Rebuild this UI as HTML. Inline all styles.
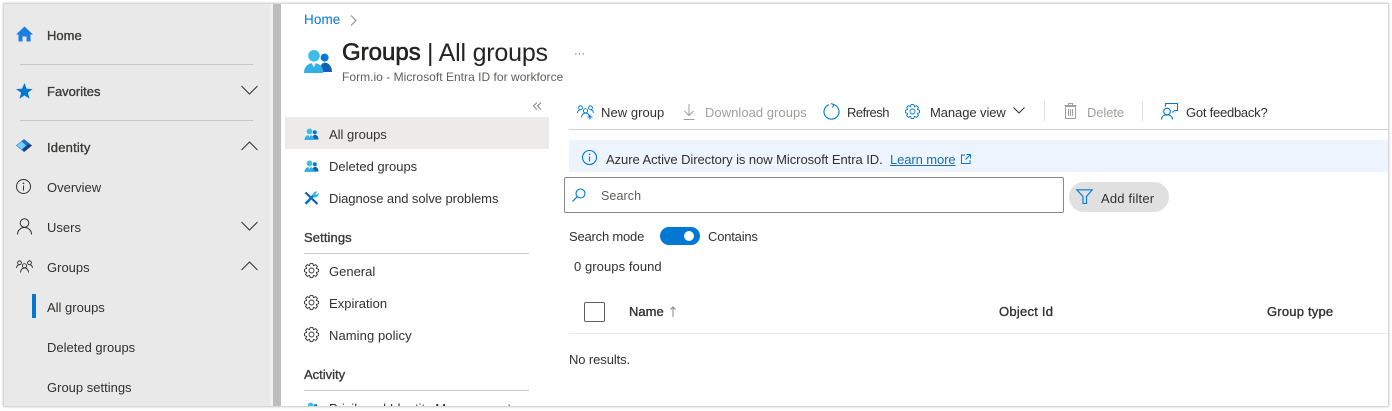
<!DOCTYPE html>
<html><head><meta charset="utf-8"><style>
html,body{margin:0;padding:0;background:#fff}
body{width:1392px;height:411px;position:relative;overflow:hidden;font-family:"Liberation Sans",sans-serif;color:#323130;font-size:13px}
.t{position:absolute;white-space:nowrap;line-height:16px}
.b{font-weight:normal;-webkit-text-stroke:.35px currentColor}
.d{color:#a19f9d}
.r{position:absolute}
svg{position:absolute;overflow:visible}
.n{fill:none;stroke:#323130;stroke-width:1}
.bl{fill:none;stroke:#0078d4;stroke-width:1.1}
</style></head><body>
<svg width="0" height="0" style="position:absolute"><defs>
<g id="ppl"><circle cx="10.300" cy="4.300" r="2" fill="#0078d4"/><path d="M8 11.500c0-3 .8-4.700 2.500-4.700S14 8.500 14 11.500z" fill="#0f62b5"/><path d="M0 12c0-3 1.800-5 4.800-5s4.900 2 4.900 5z" fill="#32b0e7"/><circle cx="5" cy="3.400" r="2.900" fill="#3fbde8"/><path d="M3.800 7l1.100 2.200L6 7z" fill="#e8f6fc"/></g>
<g id="gear" fill="none" stroke-width=".9" stroke-linejoin="round"><circle cx="7.500" cy="7.500" r="2.500"/><path d="M14.590 6.250L14.590 8.750 12.300 9.490 13.400 11.630 11.630 13.400 9.490 12.300 8.750 14.590 6.250 14.590 5.510 12.300 3.370 13.400 1.600 11.630 2.700 9.490.41 8.750.41 6.250 2.700 5.510 1.600 3.370 3.370 1.600 5.510 2.700 6.250.41 8.750.41 9.490 2.700 11.630 1.600 13.400 3.370 12.300 5.510z"/></g>
<g id="grp3" fill="none" stroke-width=".95"><circle cx="3.500" cy="2.800" r="1.900"/><circle cx="13.500" cy="2.800" r="1.900"/><circle cx="8.500" cy="5.800" r="2.100"/><path d="M.5 8c.2-2 1.300-3.200 3-3.200M16.500 8c-.2-2-1.300-3.200-3-3.200M4.500 12.500c.3-2.700 1.800-4.500 4-4.500s3.700 1.800 4 4.500"/></g>
</defs></svg>

<!-- frame -->
<div class="r" style="left:4px;top:4px;width:1384px;height:402px;background:#fff;box-shadow:0 0 2px 1px #c4c4c4"></div>
<div class="r" style="left:4px;top:4px;width:266px;height:402px;background:#e9e9e9"></div>
<div class="r" style="left:270px;top:4px;width:3px;height:402px;background:#f1f1f1"></div>
<div class="r" style="left:273px;top:4px;width:8px;height:402px;background:#bdbdbd"></div>

<!-- left nav -->
<svg style="left:16px;top:26px" width="17" height="16" viewBox="0 0 17 16"><path d="M8.500 0.500L0 8.500h2.500V15.500h4V10.500h4V15.500h4V8.500H17z" fill="#1a7fe0"/></svg>
<div class="t b" style="left:47px;top:28px;color:#3b3a39">Home</div>
<div class="r" style="left:20px;top:64px;width:233px;height:1px;background:#c8c8c8"></div>
<svg style="left:16px;top:83px" width="17" height="16" viewBox="0 0 17 16"><path d="M8.500 0l2.100 5.700 6 .3-4.700 3.800 1.600 5.900-5-3.300-5 3.300 1.600-5.900L0 6l6-.3z" fill="#0078d4"/></svg>
<div class="t b" style="left:47px;top:84px;color:#3b3a39">Favorites</div>
<svg style="left:241px;top:85px" width="17" height="10"><path d="M.5 1l8 8 8-8" class="n"/></svg>
<div class="r" style="left:20px;top:120px;width:233px;height:1px;background:#c8c8c8"></div>
<svg style="left:16px;top:139px" width="16" height="13" viewBox="0 0 16 13"><path d="M8 0l8 6.500-8 6.500-8-6.500z" fill="#2272c3"/><path d="M5.500 2.500L10 6.500 5.500 10.500 1 6.500z" fill="#6fd3f7"/><path d="M8 13L16 6.500 12.500 5 7 10.500z" fill="#1b3a8a"/></svg>
<div class="t b" style="left:47px;top:140px;color:#3b3a39;letter-spacing:.2px">Identity</div>
<svg style="left:241px;top:141px" width="17" height="10"><path d="M.5 9l8-8 8 8" class="n"/></svg>
<svg style="left:16px;top:179px" width="15" height="15" viewBox="0 0 15 15"><circle cx="7.500" cy="7.500" r="7" class="n"/><path d="M7.500 6.500v5" class="n"/><circle cx="7.500" cy="4.300" r=".8" fill="#323130"/></svg>
<div class="t" style="left:47px;top:180px">Overview</div>
<svg style="left:17px;top:218px" width="15" height="17" viewBox="0 0 15 17"><circle cx="7.500" cy="5" r="4.300" class="n"/><path d="M.5 16.500c0-4 3-7 7-7s7 3 7 7" class="n"/></svg>
<div class="t" style="left:47px;top:220px">Users</div>
<svg style="left:241px;top:221px" width="17" height="10"><path d="M.5 1l8 8 8-8" class="n"/></svg>
<svg style="left:16px;top:260px" width="17" height="13" viewBox="0 0 17 13"><use href="#grp3" stroke="#323130"/></svg>
<div class="t" style="left:47px;top:260px">Groups</div>
<svg style="left:241px;top:261px" width="17" height="10"><path d="M.5 9l8-8 8 8" class="n"/></svg>
<div class="r" style="left:32px;top:294px;width:4px;height:24px;background:#0078d4"></div>
<div class="t" style="left:47px;top:300px">All groups</div>
<div class="t" style="left:47px;top:340px">Deleted groups</div>
<div class="t" style="left:47px;top:380px">Group settings</div>

<!-- header -->
<div class="t" style="left:304px;top:12px;color:#0078d4;font-size:13.500px;letter-spacing:.1px">Home</div>
<svg style="left:350px;top:15px" width="7" height="11"><path d="M1 .5l5 5-5 5" fill="none" stroke="#8a8886"/></svg>
<svg style="left:304px;top:49px" width="28" height="24" viewBox="0 0 14 12"><use href="#ppl"/></svg>
<div class="t" style="left:342px;top:38px;font-size:24px;line-height:30px;color:#252423;-webkit-text-stroke:.6px #252423">Groups</div>
<div class="t" style="left:427px;top:38px;font-size:25px;line-height:30px;color:#252423;letter-spacing:-.2px">| All groups</div>
<div class="t" style="left:342px;top:69px;font-size:12px;color:#605e5c;letter-spacing:.03px">Form.io - Microsoft Entra ID for workforce</div>
<div class="t" style="left:574px;top:46px;font-size:11px;color:#605e5c">···</div>

<!-- side menu -->
<svg style="left:533px;top:102px" width="8" height="8"><path d="M4 .5L.5 4 4 7.500M8 .5L4.500 4 8 7.500" fill="none" stroke="#605e5c" stroke-width=".8"/></svg>
<div class="r" style="left:285px;top:117px;width:264px;height:32px;background:#edebe9"></div>
<svg style="left:304px;top:128px" width="15" height="12" viewBox="0 0 14 12"><use href="#ppl"/></svg>
<div class="t" style="left:329px;top:127px">All groups</div>
<svg style="left:304px;top:160px" width="15" height="12" viewBox="0 0 14 12"><use href="#ppl"/></svg>
<div class="t" style="left:329px;top:159px">Deleted groups</div>
<svg style="left:304px;top:191px" width="15" height="14" viewBox="0 0 15 14"><path d="M1.500 1.500L13.500 13" stroke="#0f5fa8" stroke-width="2.200"/><path d="M1.500 12.800L10 4" stroke="#0078d4" stroke-width="2.600"/><path d="M8.500 4.500c0-2.500 2.500-4.500 5-4l-2.200 2.200 1.300 1.300L14.800 1.800c.5 2.500-1.800 5-4.300 4.700z" fill="#32b0e7"/></svg>
<div class="t" style="left:329px;top:191px;letter-spacing:-.07px">Diagnose and solve problems</div>
<div class="t b" style="left:304px;top:230px;color:#3b3a39;letter-spacing:.1px">Settings</div>
<div class="r" style="left:304px;top:253px;width:225px;height:1px;background:#c8c6c4"></div>
<svg style="left:304px;top:263px" width="15" height="15"><use href="#gear" stroke="#323130"/></svg>
<div class="t" style="left:329px;top:264px">General</div>
<svg style="left:304px;top:295px" width="15" height="15"><use href="#gear" stroke="#323130"/></svg>
<div class="t" style="left:329px;top:296px;letter-spacing:.03px">Expiration</div>
<svg style="left:304px;top:327px" width="15" height="15"><use href="#gear" stroke="#323130"/></svg>
<div class="t" style="left:329px;top:328px;letter-spacing:.08px">Naming policy</div>
<div class="t b" style="left:304px;top:367px;color:#3b3a39">Activity</div>
<div class="r" style="left:304px;top:390px;width:225px;height:1px;background:#c8c6c4"></div>
<div class="r" style="left:304px;top:398px;width:16px;height:8px;overflow:hidden"><svg style="left:2px;top:4px" width="13" height="11" viewBox="0 0 14 12"><use href="#ppl"/></svg></div>
<div class="r" style="left:285px;top:398px;width:245px;height:8px;overflow:hidden"><div class="t" style="left:44px;top:3px">Privileged Identity Management</div></div>

<!-- toolbar -->
<svg style="left:577px;top:105px" width="17" height="15" viewBox="0 0 17 15"><use href="#grp3" stroke="#0078d4"/><path d="M13 9.500v5M10.500 12h5" stroke="#0078d4" fill="none"/></svg>
<div class="t" style="left:601px;top:105px;letter-spacing:.05px">New group</div>
<svg style="left:683px;top:104px" width="12" height="16"><path d="M6 0v11M1.500 7l4.500 4.500L10.500 7M.5 15.500h11" fill="none" stroke="#a19f9d"/></svg>
<div class="t d" style="left:705px;top:105px;letter-spacing:.04px">Download groups</div>
<svg style="left:823px;top:103px" width="17" height="17" viewBox="0 0 17 17"><path d="M11 1.600a7.500 7.500 0 1 1-5 0M8 .5l3 1.200-1.500 2.800" class="bl"/></svg>
<div class="t" style="left:847px;top:105px;letter-spacing:-.5px">Refresh</div>
<svg style="left:905px;top:104px" width="16" height="16"><use href="#gear" stroke="#0078d4"/></svg>
<div class="t" style="left:930px;top:105px;letter-spacing:-.08px">Manage view</div>
<svg style="left:1013px;top:107px" width="12" height="7"><path d="M.5.500l5.500 5.500L11.500.500" class="n"/></svg>
<div class="r" style="left:1044px;top:101px;width:1px;height:20px;background:#e1dfdd"></div>
<svg style="left:1064px;top:103px" width="13" height="16"><path d="M1.500 3.500h10V15.500h-10zM.5 2.500h12M4.500 2.500V.5h4v2M4.500 6v7M6.500 6v7M8.500 6v7" fill="none" stroke="#a19f9d"/></svg>
<div class="t d" style="left:1087px;top:105px;letter-spacing:-.1px">Delete</div>
<div class="r" style="left:1142px;top:101px;width:1px;height:20px;background:#e1dfdd"></div>
<svg style="left:1161px;top:103px" width="17" height="17" viewBox="0 0 17 17"><circle cx="6" cy="8.500" r="3.300" class="bl"/><path d="M.5 16.500c0-3 2.300-4.700 5.500-4.700s5.500 1.700 5.500 4.700M4.500 3.500V.5h12v7h-3l-2 2" class="bl"/></svg>
<div class="t" style="left:1186px;top:105px;letter-spacing:-.24px">Got feedback?</div>
<div class="r" style="left:569px;top:129px;width:819px;height:1px;background:#d2d0ce"></div>

<!-- banner -->
<div class="r" style="left:569px;top:140px;width:819px;height:32px;background:#eef4fd"></div>
<svg style="left:582px;top:150px" width="15" height="15" viewBox="0 0 15 15"><circle cx="7.500" cy="7.500" r="7" class="bl"/><path d="M7.500 6.500v5" class="bl"/><circle cx="7.500" cy="4.300" r=".8" fill="#0078d4"/></svg>
<div class="t" style="left:606px;top:152px;letter-spacing:-.06px">Azure Active Directory is now Microsoft Entra ID.</div>
<div class="t" style="left:890px;top:152px;color:#1a6fb0;text-decoration:underline;letter-spacing:-.1px">Learn more</div>
<svg style="left:961px;top:154px" width="10" height="10"><path d="M4 1H.5v8.500h8.500V6M5.500.5h4v4M9.500.5L4.500 5.500" fill="none" stroke="#0078d4"/></svg>

<!-- search -->
<div class="r" style="left:564px;top:177px;width:498px;height:34px;border:1px solid #8a8886;border-radius:2px;background:#fff"></div>
<svg style="left:572px;top:188px" width="14" height="14" viewBox="0 0 14 14"><circle cx="8.500" cy="5.500" r="4.500" class="bl"/><path d="M5.300 8.700L.5 13.500" class="bl"/></svg>
<div class="t" style="left:601px;top:188px;font-size:12.500px;color:#605e5c;letter-spacing:.1px">Search</div>
<div class="r" style="left:1069px;top:182px;width:100px;height:30px;border-radius:15px;background:#e0e0e0"></div>
<svg style="left:1076px;top:189px" width="18" height="16" viewBox="0 0 18 16"><path d="M.8.800h15.400L10.500 7.500V14.500H7V7.500z" class="bl"/></svg>
<div class="t" style="left:1101px;top:191px;letter-spacing:.2px">Add filter</div>

<!-- search mode -->
<div class="t" style="left:569px;top:229px;letter-spacing:-.2px">Search mode</div>
<div class="r" style="left:660px;top:227px;width:40px;height:18px;border-radius:9px;background:#0078d4"></div>
<div class="r" style="left:684px;top:231px;width:10px;height:10px;border-radius:5px;background:#fff"></div>
<div class="t" style="left:708px;top:229px;letter-spacing:-.2px">Contains</div>
<div class="t" style="left:574px;top:259px;letter-spacing:.07px">0 groups found</div>

<!-- table -->
<div class="r" style="left:584px;top:302px;width:19px;height:18px;border:1px solid #605e5c;border-radius:2px"></div>
<div class="t b" style="left:629px;top:304px">Name</div>
<svg style="left:670px;top:306px" width="6" height="11"><path d="M3 11V1M.5 3.500L3 1l2.500 2.500" fill="none" stroke="#8a8886"/></svg>
<div class="t b" style="left:999px;top:304px;letter-spacing:.25px">Object Id</div>
<div class="t b" style="left:1267px;top:304px;letter-spacing:.2px">Group type</div>
<div class="r" style="left:569px;top:333px;width:819px;height:1px;background:#edebe9"></div>
<div class="t" style="left:569px;top:352px;letter-spacing:-.1px">No results.</div>
</body></html>
